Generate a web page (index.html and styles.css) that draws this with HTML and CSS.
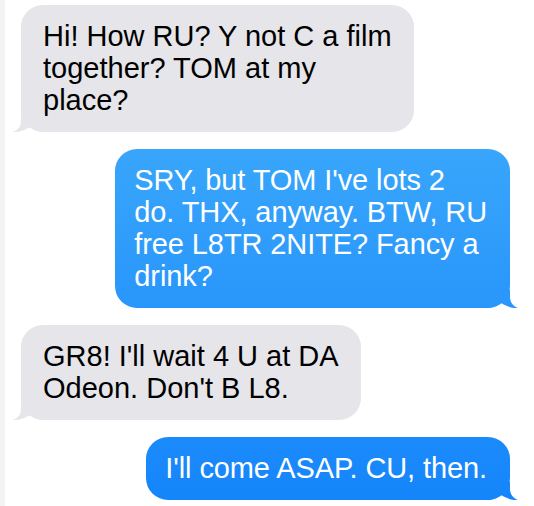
FILE: index.html
```html
<!DOCTYPE html>
<html>
<head>
<meta charset="utf-8">
<link rel="stylesheet" href="styles.css">
</head>
<body>
<main class="thread">
  <div class="msg in">Hi! How RU? Y not C a film<br>together? TOM at my<br>place?</div>
  <div class="msg out">SRY, but TOM I've lots 2<br>do. THX, anyway. BTW, RU<br>free L8TR 2NITE? Fancy a<br>drink?</div>
  <div class="msg in">GR8! I'll wait 4 U at DA<br>Odeon. Don't B L8.</div>
  <div class="msg out">I'll come ASAP. CU, then.</div>
</main>
</body>
</html>
```
FILE: styles.css
```css
html, body {
  margin: 0;
  padding: 0;
  background: #ffffff;
}
body {
  width: 534px;
  height: 506px;
  overflow: hidden;
  border-left: 5px solid #f3f3f4;
  box-sizing: border-box;
}
.thread {
  display: flex;
  flex-direction: column;
  padding: 5px 24px 0 16px;
  gap: 17px;
  font-family: "Liberation Sans", Arial, sans-serif;
  font-size: 29px;
  line-height: 32px;
}
.msg {
  position: relative;
  white-space: nowrap;
  padding: 15px 22px 16px;
  border-radius: 22px;
}
.msg::after {
  content: "";
  position: absolute;
  bottom: 0;
  width: 32px;
  height: 18px;
}
.in {
  align-self: flex-start;
  background: #e5e5ea;
  color: #000;
}
.in::after {
  left: -8px;
  background: #e5e5ea;
  clip-path: path("M 8 0 L 8 7 C 8 12 5 16 0 18 C 6 18.5 12 16 17 13 C 21 16 26 18 32 18 L 32 0 Z");
}
.out {
  align-self: flex-end;
  color: #fff;
  padding-left: 19px;
  padding-right: 23px;
  letter-spacing: -0.1px;
  background: linear-gradient(#48b3fb, #1484fb) fixed;
}
.out::after {
  right: -8px;
  background: linear-gradient(#48b3fb, #1484fb) fixed;
  clip-path: path("M 24 0 L 24 7 C 24 12 27 16 32 18 C 26 18.5 20 16 15 13 C 11 16 6 18 0 18 L 0 0 Z");
}
```
